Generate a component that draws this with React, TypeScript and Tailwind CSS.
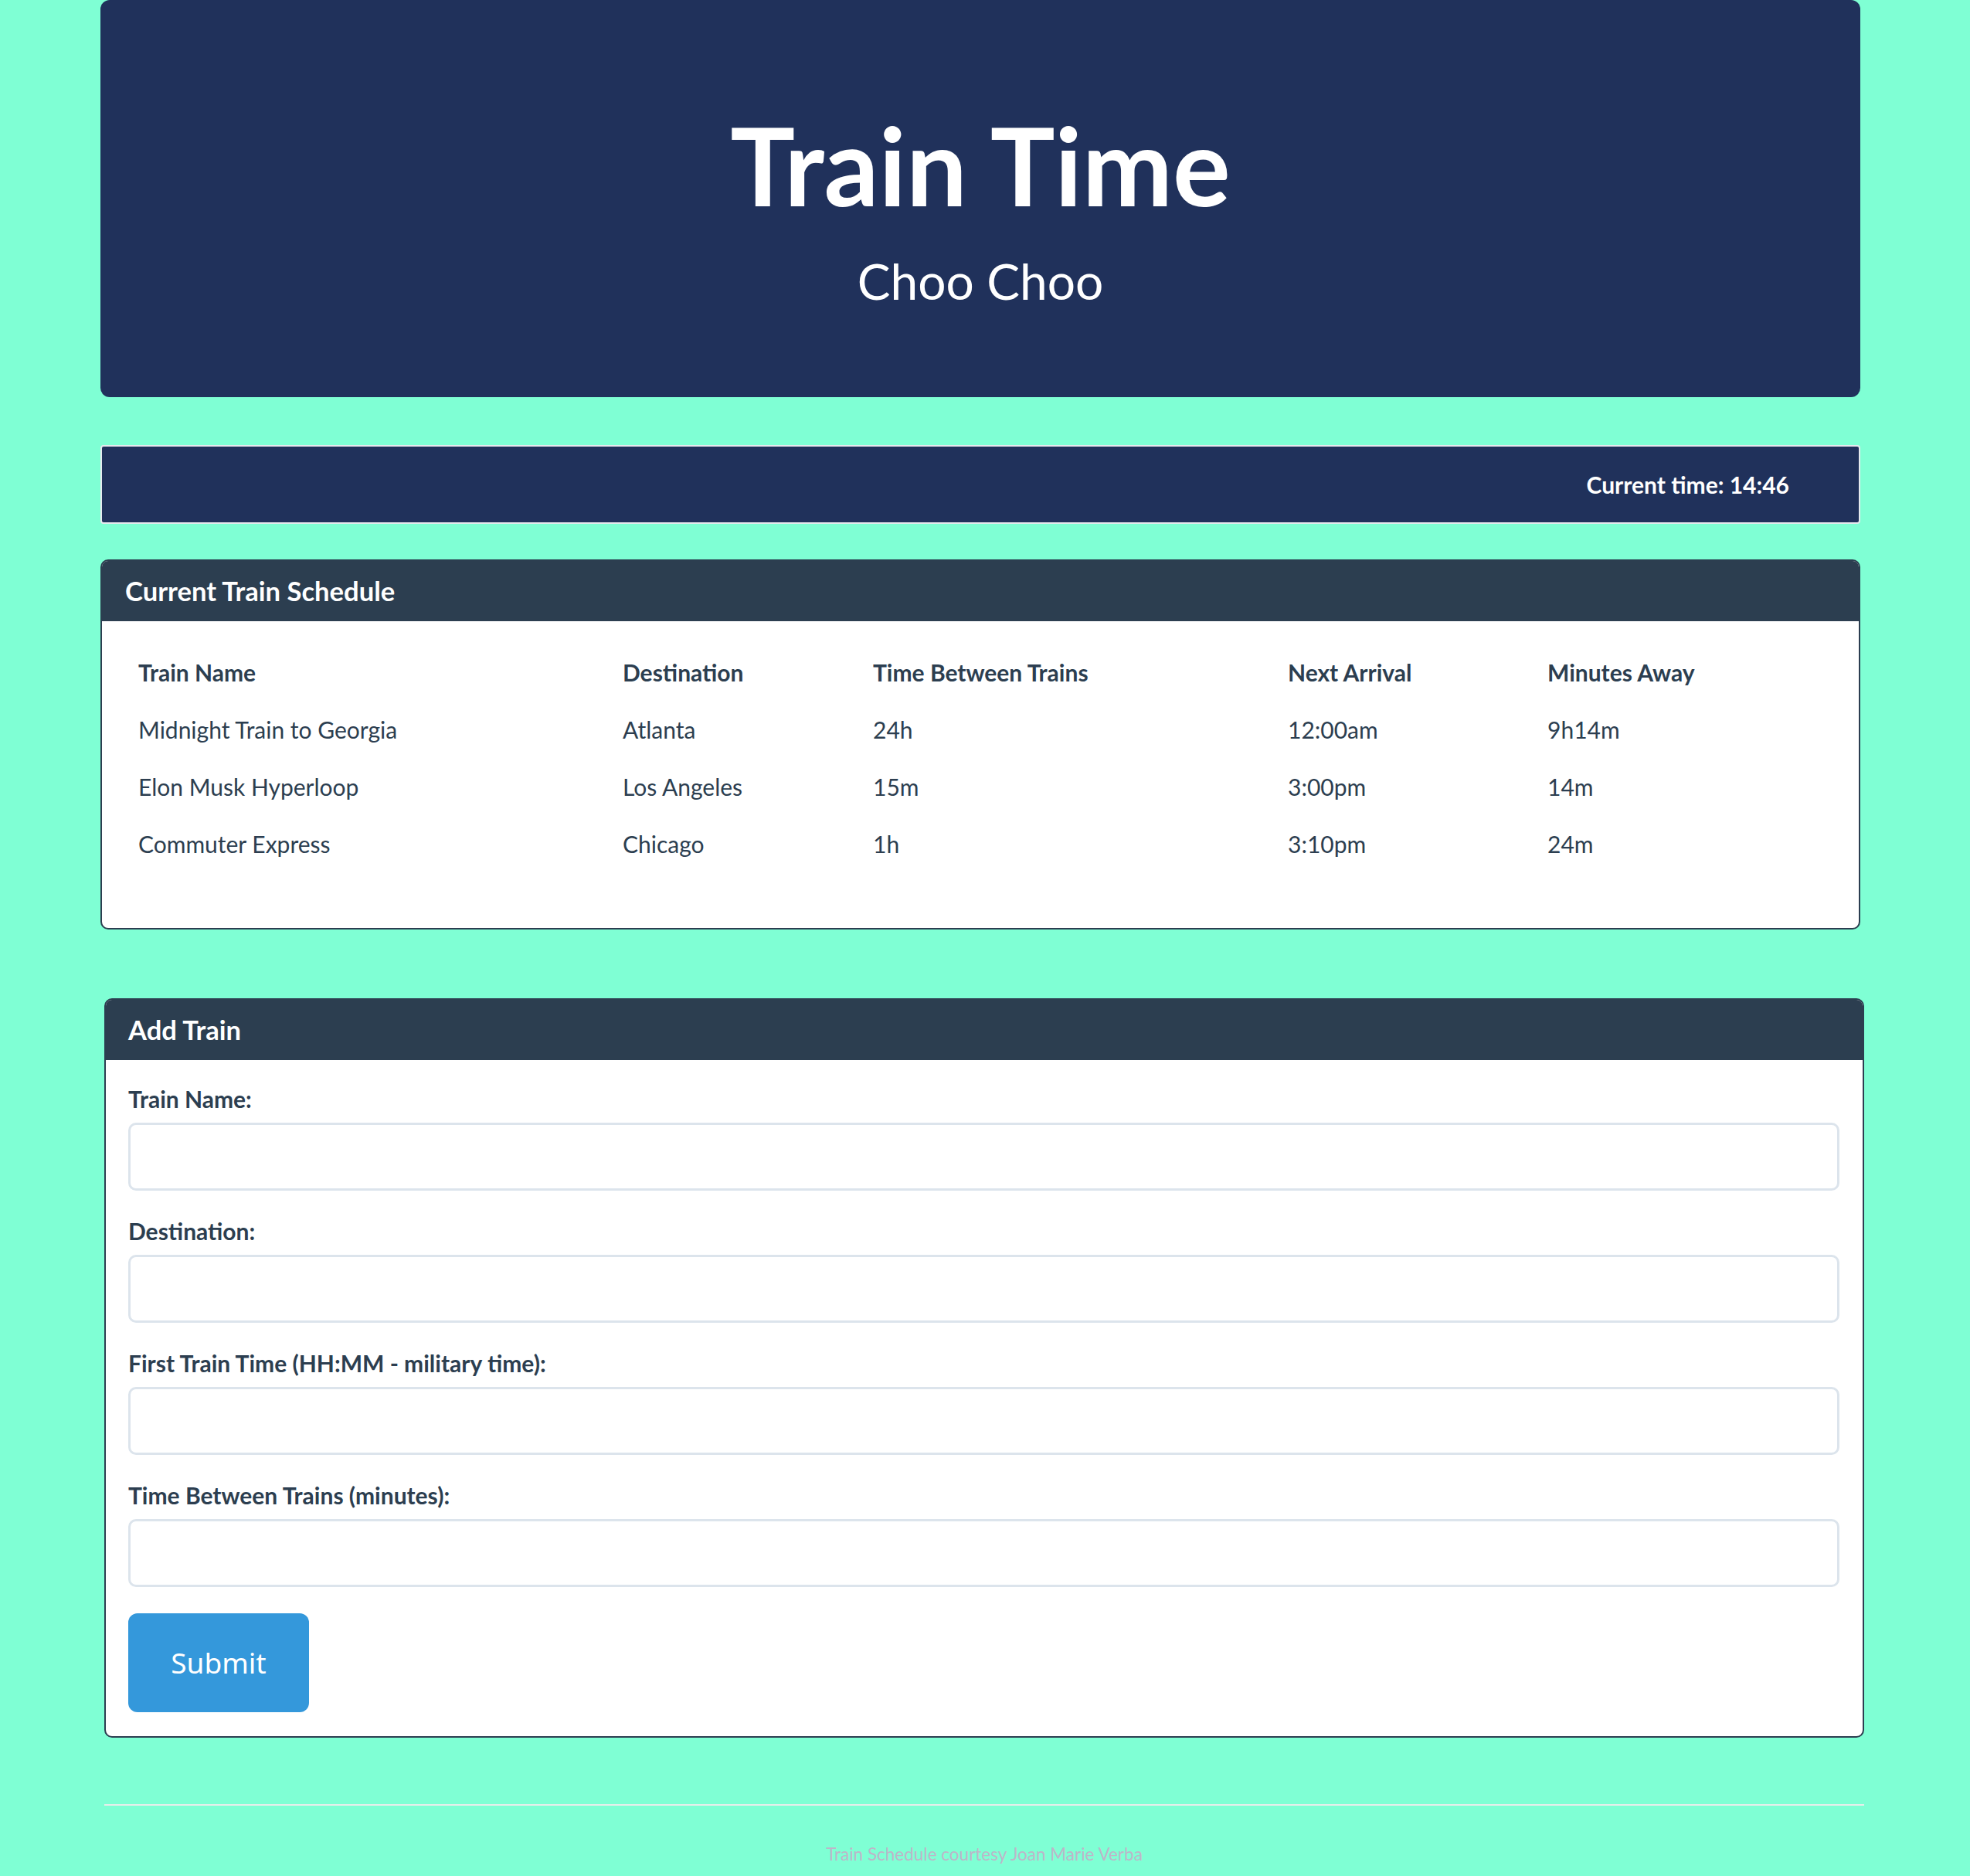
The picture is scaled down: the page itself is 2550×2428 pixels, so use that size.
import React from "react";

const trains = [
  { name: "Midnight Train to Georgia", dest: "Atlanta", freq: "24h", next: "12:00am", away: "9h14m" },
  { name: "Elon Musk Hyperloop", dest: "Los Angeles", freq: "15m", next: "3:00pm", away: "14m" },
  { name: "Commuter Express", dest: "Chicago", freq: "1h", next: "3:10pm", away: "24m" },
];

const fields = [
  "Train Name:",
  "Destination:",
  "First Train Time (HH:MM - military time):",
  "Time Between Trains (minutes):",
];

export default function App() {
  return (
    <div className="min-h-[2428px] bg-[#7fffd4] font-['Lato',sans-serif] text-[#2c3e50]">
      <div className="ml-[130px] w-[2278px]">
        {/* Jumbotron */}
        <div className="h-[514px] rounded-[12px] bg-[#20315b] flex flex-col items-center pt-[143px] text-white">
          <h1 className="text-[140px] leading-[140px] font-bold">Train Time</h1>
          <p className="mt-[49px] text-[64px] leading-[64px]">Choo Choo</p>
        </div>

        {/* Clock bar */}
        <div className="mt-[62px] h-[102px] border-2 border-[#e6e9ee] rounded-[4px] bg-[#20315b] flex items-center justify-end pr-[90px]">
          <span className="text-white font-bold text-[30px]">Current time: 14:46</span>
        </div>

        {/* Schedule */}
        <div className="mt-[46px] rounded-[10px] border-2 border-[#2c3e50] bg-white overflow-hidden">
          <div className="h-[78px] bg-[#2c3e50] flex items-center px-[30px]">
            <span className="text-white font-bold text-[34.6px]">Current Train Schedule</span>
          </div>
          <div className="px-[23px] pt-[29px] pb-[72px]">
            <table className="w-full text-[30px] text-left">
              <thead>
                <tr className="h-[74px]">
                  <th className="pl-[24px] w-[651px] font-bold">Train Name</th>
                  <th className="w-[324px] font-bold">Destination</th>
                  <th className="w-[537px] font-bold">Time Between Trains</th>
                  <th className="w-[336px] font-bold">Next Arrival</th>
                  <th className="font-bold">Minutes Away</th>
                </tr>
              </thead>
              <tbody>
                {trains.map((t) => (
                  <tr key={t.name} className="h-[74px]">
                    <td className="pl-[24px]">{t.name}</td>
                    <td>{t.dest}</td>
                    <td>{t.freq}</td>
                    <td>{t.next}</td>
                    <td>{t.away}</td>
                  </tr>
                ))}
              </tbody>
            </table>
          </div>
        </div>

        {/* Add train */}
        <div className="mt-[89px] ml-[5px] w-[2278px] rounded-[10px] border-2 border-[#2c3e50] bg-white overflow-hidden">
          <div className="h-[78px] bg-[#2c3e50] flex items-center px-[29px]">
            <span className="text-white font-bold text-[34.6px]">Add Train</span>
          </div>
          <div className="pl-[29px] pr-[30px] pt-[32px] pb-[31px]">
            {fields.map((f) => (
              <div key={f} className="mb-[34px]">
                <label className="block text-[30px] leading-[36px] font-bold">{f}</label>
                <input className="mt-[13px] block w-full h-[88px] rounded-[10px] border-[3px] border-[#dce4ec] bg-white" />
              </div>
            ))}
            <button className="w-[234px] h-[128px] rounded-[12px] bg-[#3498db] text-white text-[37px] font-['Noto_Sans',sans-serif]">
              Submit
            </button>
          </div>
        </div>

        {/* Footer */}
        <div className="ml-[5px] w-[2278px]">
          <div className="mt-[86px] h-[2px] bg-[#e8eeeb]" />
          <p className="mt-[46px] text-center text-[22.5px] text-[#bdb6c9]">Train Schedule courtesy Joan Marie Verba</p>
        </div>
      </div>
    </div>
  );
}
